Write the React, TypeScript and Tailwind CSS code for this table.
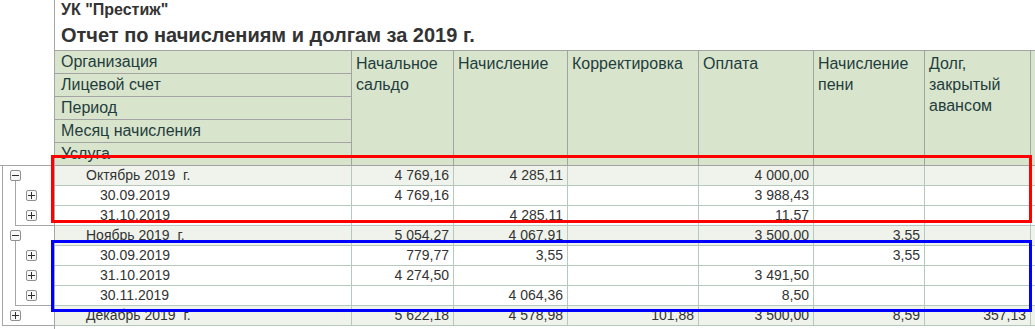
import React from "react";

type Row = { label: string; group: boolean; vals: string[] };

const rows: Row[] = [
  { label: "Октябрь 2019  г.", group: true, vals: ["4 769,16", "4 285,11", "", "4 000,00", "", ""] },
  { label: "30.09.2019", group: false, vals: ["4 769,16", "", "", "3 988,43", "", ""] },
  { label: "31.10.2019", group: false, vals: ["", "4 285,11", "", "11,57", "", ""] },
  { label: "Ноябрь 2019  г.", group: true, vals: ["5 054,27", "4 067,91", "", "3 500,00", "3,55", ""] },
  { label: "30.09.2019", group: false, vals: ["779,77", "3,55", "", "", "3,55", ""] },
  { label: "31.10.2019", group: false, vals: ["4 274,50", "", "", "3 491,50", "", ""] },
  { label: "30.11.2019", group: false, vals: ["", "4 064,36", "", "8,50", "", ""] },
  { label: "Декабрь 2019  г.", group: true, vals: ["5 622,18", "4 578,98", "101,88", "3 500,00", "8,59", "357,13"] },
];

const headCols = [
  ["Начальное", "сальдо"],
  ["Начисление"],
  ["Корректировка"],
  ["Оплата"],
  ["Начисление", "пени"],
  ["Долг,", "закрытый", "авансом"],
];

const gridCols = "grid grid-cols-[297px_102px_114px_131px_115px_111px_106px_1fr]";

function Box({ x, y, plus }: { x: number; y: number; plus: boolean }) {
  return (
    <g>
      <rect x={x + 0.5} y={y + 0.5} width={10} height={10} rx={1.5} fill="#f7f7f7" stroke="#8f8f8f" />
      <line x1={x + 2} y1={y + 5.5} x2={x + 9} y2={y + 5.5} stroke="#2e2e2e" strokeWidth={1} />
      {plus && <line x1={x + 5.5} y1={y + 2} x2={x + 5.5} y2={y + 9} stroke="#2e2e2e" strokeWidth={1} />}
    </g>
  );
}

function Tree() {
  const c = "#a6a6a6";
  return (
    <svg width="54" height="329" viewBox="0 0 54 329" className="block">
      <line x1="0" y1="165.5" x2="54" y2="165.5" stroke={c} />
      <line x1="2.5" y1="165" x2="2.5" y2="326" stroke={c} />
      <line x1="2" y1="325.5" x2="54" y2="325.5" stroke={c} />
      <line x1="15.5" y1="181" x2="15.5" y2="225.5" stroke={c} />
      <line x1="15" y1="225.5" x2="54" y2="225.5" stroke={c} />
      <line x1="15.5" y1="241" x2="15.5" y2="305.5" stroke={c} />
      <line x1="15" y1="305.5" x2="54" y2="305.5" stroke={c} />
      <Box x={10} y={170} plus={false} />
      <Box x={26} y={190} plus={true} />
      <Box x={26} y={210} plus={true} />
      <Box x={10} y={230} plus={false} />
      <Box x={26} y={250} plus={true} />
      <Box x={26} y={270} plus={true} />
      <Box x={26} y={290} plus={true} />
      <Box x={10} y={310} plus={true} />
    </svg>
  );
}

export default function App() {
  return (
    <div
      className="relative w-[1035px] h-[329px] overflow-hidden bg-white flex"
      style={{ fontFamily: '"Liberation Sans", Arial, sans-serif' }}
    >
      <div className="w-[55px] shrink-0 border-r border-[#a6a6a6]">
        <Tree />
      </div>
      <div className="flex-1 flex flex-col min-w-0">
        <div className="h-[50px] pl-[6px] text-[#333]">
          <div className="text-[16px] leading-[20px] font-bold">УК "Престиж"</div>
          <div className="pt-[3px] text-[20px] leading-[24px] font-bold">Отчет по начислениям и долгам за 2019 г.</div>
        </div>
        <div className={`${gridCols} h-[116px] border-y border-[#a3a3a3] bg-[#d9e4cc] text-[16px] text-[#1f3d3d]`}>
          <div className="border-r border-[#a3a3a3] flex flex-col overflow-hidden">
            {["Организация", "Лицевой счет", "Период", "Месяц начисления", "Услуга"].map((t, i) => (
              <div
                key={t}
                className={`h-[23px] shrink-0 pl-[6px] leading-[22px] ${i < 4 ? "border-b border-[#a3a3a3]" : ""}`}
              >
                {t}
              </div>
            ))}
          </div>
          {headCols.map((lines, i) => (
            <div key={i} className="border-r border-[#a3a3a3] pl-[4px] pt-[2px] leading-[21px]">
              {lines.map((l) => (
                <div key={l}>{l}</div>
              ))}
            </div>
          ))}
          <div />
        </div>
        {rows.map((r, i) => (
          <div
            key={i}
            className={`${gridCols} h-[20px] border-b border-[#b5c9bd] text-[14px] leading-[19px] text-[#333] ${
              r.group ? "bg-[#eff3ec]" : "bg-white"
            }`}
          >
            <div className={`border-r border-[#b5c9bd] whitespace-pre ${r.group ? "pl-[31px]" : "pl-[45px]"}`}>
              {r.label}
            </div>
            {r.vals.map((v, j) => (
              <div key={j} className="border-r border-[#b5c9bd] text-right pr-[4px]">
                {v}
              </div>
            ))}
            <div />
          </div>
        ))}
      </div>
      <div className="absolute left-[51px] top-[155px] w-[981px] h-[68px] border-[3px] border-[#ff0000] pointer-events-none" />
      <div className="absolute left-[51px] top-[240px] w-[981px] h-[72px] border-[3px] border-[#0000ff] pointer-events-none" />
    </div>
  );
}
